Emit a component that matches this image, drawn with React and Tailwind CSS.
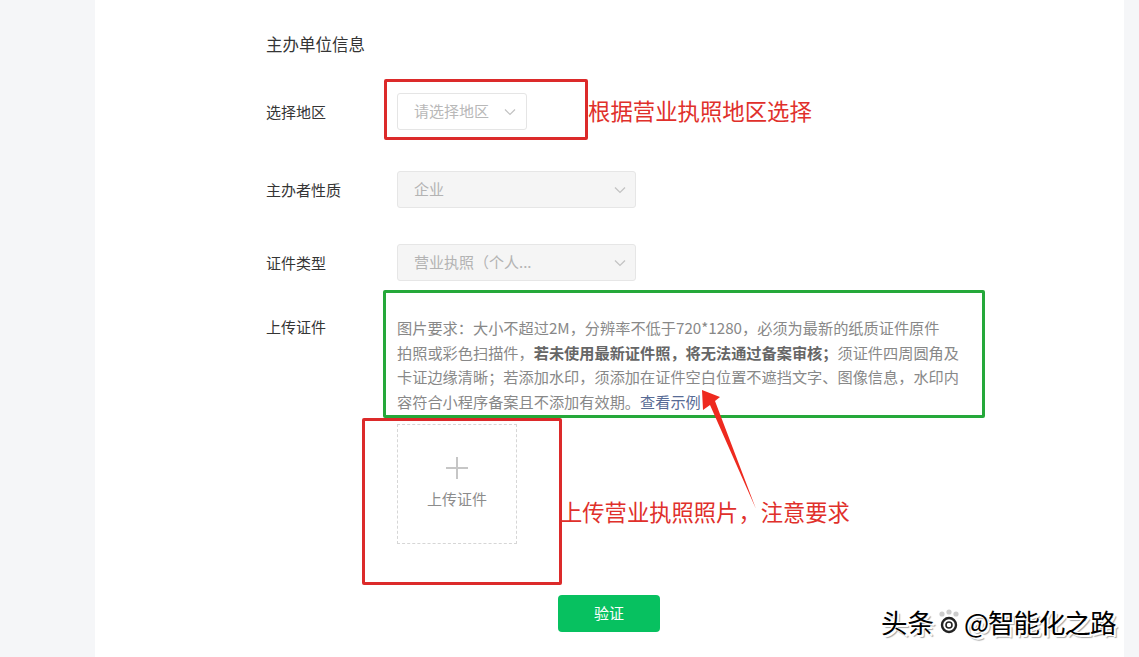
import React from 'react';

const Chevron = ({ className }) => (
  <svg viewBox="0 0 12 8" className={className} fill="none" stroke="currentColor" strokeWidth="1.2">
    <path d="M1 1.5 L6 6.5 L11 1.5" />
  </svg>
);

const Row = ({ label, children, align = 'items-center', className = '' }) => (
  <div className={`flex ${align} ${className}`}>
    <div className="w-[131px] shrink-0 text-[15px] leading-[24px] text-[#353535]">{label}</div>
    {children}
  </div>
);

const App = () => {
  return (
    <div className="relative flex h-[657px] w-[1139px] overflow-hidden bg-[#f5f6f8] font-['Noto_Sans_CJK_SC',sans-serif]">
      {/* left gutter */}
      <div className="w-[95px] shrink-0" />

      {/* form page */}
      <div className="w-[1029px] shrink-0 bg-white pl-[171px] pt-[32px]">
        <div className="h-[24px] text-[16.5px] leading-[24px] text-[#353535]">主办单位信息</div>

        <Row label="选择地区" className="mt-[37px]">
          <div className="flex h-[37px] w-[130px] items-center justify-between rounded-[3px] border border-[#e5e5e5] bg-white pl-[16px] pr-[10px]">
            <span className="text-[15px] text-[#b8b8b8]">请选择地区</span>
            <Chevron className="h-[8px] w-[12px] text-[#c2c2c2]" />
          </div>
        </Row>

        <Row label="主办者性质" className="mt-[41px]">
          <div className="flex h-[37px] w-[239px] items-center justify-between rounded-[3px] border border-[#e6e6e6] bg-[#f5f5f5] pl-[16px] pr-[9px]">
            <span className="text-[15px] text-[#b3b3b3]">企业</span>
            <Chevron className="h-[8px] w-[12px] text-[#c2c2c2]" />
          </div>
        </Row>

        <Row label="证件类型" className="mt-[36px]">
          <div className="flex h-[37px] w-[239px] items-center justify-between rounded-[3px] border border-[#e6e6e6] bg-[#f5f5f5] pl-[16px] pr-[9px]">
            <span className="text-[15px] text-[#b3b3b3]">营业执照（个人...</span>
            <Chevron className="h-[8px] w-[12px] text-[#c2c2c2]" />
          </div>
        </Row>

        <Row label="上传证件" align="items-start" className="mt-[34px]">
          <div className="text-[15.2px] leading-[24.5px] text-[#888888] whitespace-nowrap">
            <div>图片要求：大小不超过2M，分辨率不低于720*1280，必须为最新的纸质证件原件</div>
            <div>
              拍照或彩色扫描件，<span className="font-bold text-[#666666]">若未使用最新证件照，将无法通过备案审核；</span>须证件四周圆角及
            </div>
            <div>卡证边缘清晰；若添加水印，须添加在证件空白位置不遮挡文字、图像信息，水印内</div>
            <div>
              容符合小程序备案且不添加有效期。<span className="text-[#576b95]">查看示例</span>
            </div>
          </div>
        </Row>

        <div className="ml-[131px] mt-[11px] flex h-[120px] w-[120px] flex-col items-center justify-center border border-dashed border-[#d6d6d6]">
          <svg viewBox="0 0 22 22" className="h-[22px] w-[22px] text-[#c6c6c6]" fill="none" stroke="currentColor" strokeWidth="2">
            <path d="M11 0 V22 M0 11 H22" />
          </svg>
          <span className="mt-[9px] text-[15px] text-[#8c8c8c]">上传证件</span>
        </div>

        <div className="ml-[292px] mt-[51px] flex h-[37px] w-[102px] items-center justify-center rounded-[4px] bg-[#07c160] text-[15px] text-white">
          验证
        </div>
      </div>

      {/* right gutter */}
      <div className="flex-1" />

      {/* annotations */}
      <div className="pointer-events-none absolute left-[384px] top-[79px] h-[61px] w-[204px] rounded-[2px] border-[3px] border-[#dc2a2a]" />
      <div className="pointer-events-none absolute left-[588px] top-[94px] text-[22.4px] leading-[32px] text-[#e0302b]">根据营业执照地区选择</div>
      <div className="pointer-events-none absolute left-[383px] top-[290px] h-[128px] w-[602px] rounded-[2px] border-[3px] border-[#25a83a]" />
      <div className="pointer-events-none absolute left-[362px] top-[418px] h-[167px] w-[200px] rounded-[2px] border-[3px] border-[#dc2a2a]" />
      <div className="pointer-events-none absolute left-[560px] top-[495px] text-[22.3px] leading-[32px] text-[#e0302b]">上传营业执照照片，注意要求</div>
      <svg className="pointer-events-none absolute left-0 top-0" width="1139" height="657">
        <polygon points="702,390 720,397 715,401 756,509 710,405 703,410" fill="#ee2a1f" />
      </svg>

      {/* watermark */}
      <div className="pointer-events-none absolute left-[881px] top-[604px] flex items-center text-[26.5px] leading-[36px] text-black [text-shadow:2px_2px_0_#fff,-1px_-1px_0_#fff,3px_3px_1px_rgba(0,0,0,0.35)]">
        <span>头条</span>
        <svg viewBox="0 0 28 28" className="mx-[1px] h-[28px] w-[28px]">
          <circle cx="14" cy="17" r="7" fill="none" stroke="#222" strokeWidth="2.4" />
          <circle cx="7" cy="6" r="2.6" fill="#ccc" />
          <circle cx="14" cy="4" r="2.6" fill="#ccc" />
          <circle cx="21" cy="6" r="2.6" fill="#ccc" />
          <circle cx="14" cy="17" r="3" fill="#fff" stroke="#222" strokeWidth="1.6" />
        </svg>
        <span className="tracking-[-1px]">@智能化之路</span>
      </div>
    </div>
  );
};

export default App;
